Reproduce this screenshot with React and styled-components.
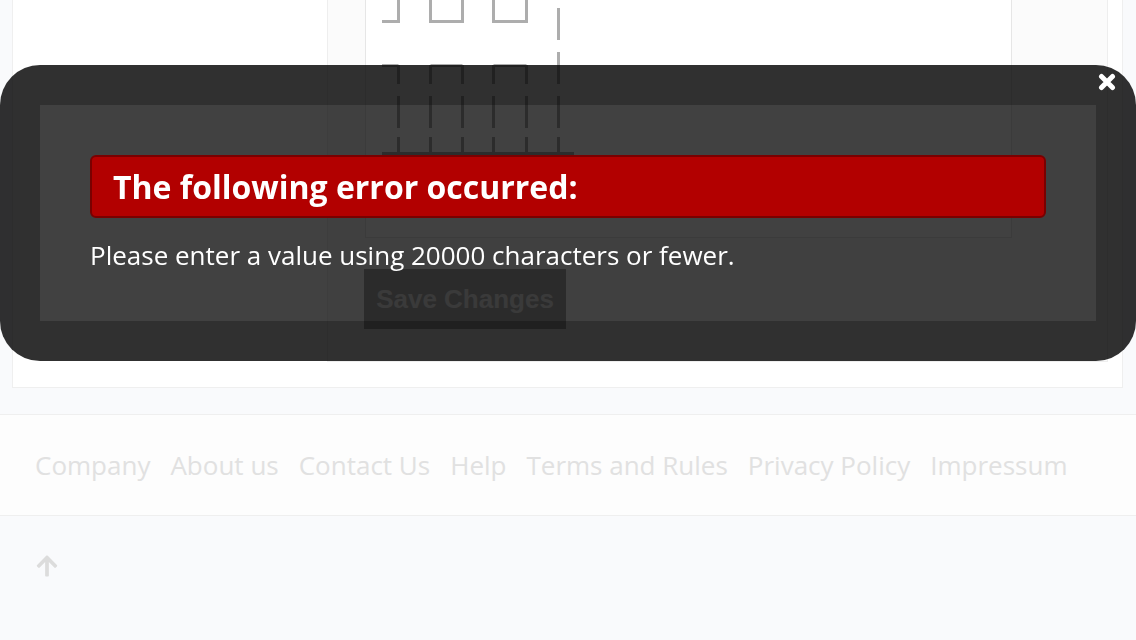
import styled, { createGlobalStyle } from 'styled-components';
import { FaArrowUp } from 'react-icons/fa';

const GlobalStyle = createGlobalStyle`
 html, body {
  margin: 0;
  padding: 0;
 }
 body {
  background: #f9fafc;
  font-family: "Open Sans", "Noto Sans", sans-serif;
  width: 1136px;
  height: 640px;
  overflow: hidden;
 }
 * {
  box-sizing: border-box;
 }
`;

const Container = styled.div`
 display: flex;
 height: 388px;
 margin: 0 13px 0 12px;
 background: #fff;
 border: 1px solid #efefef;
 border-top: none;
`;

const Sidebar = styled.aside`
 width: 314px;
 flex-shrink: 0;
`;

const Main = styled.div`
 flex: 1;
 height: 362px;
 margin-right: 14px;
 padding-left: 37px;
 background: #fbfbfb;
 border: 1px solid #eeeeee;
 border-top: none;
`;

const Editor = styled.div`
 width: 647px;
 height: 238px;
 padding-left: 15px;
 background: #fff;
 border: 1px solid #e6e6e6;
 border-top: none;
`;

const SaveButton = styled.button`
 display: block;
 width: 202px;
 height: 60px;
 margin: 31px 0 0 -1px;
 padding: 0;
 border: none;
 background: #a9a9a9;
 color: #e4e4e4;
 font-family: "Liberation Sans", Arial, sans-serif;
 font-weight: bold;
 font-size: 26px;
`;

const Footer = styled.footer`
 display: flex;
 align-items: center;
 gap: 20px;
 height: 102px;
 margin-top: 26px;
 padding-left: 35px;
 background: #fdfdfd;
 border-top: 1px solid #efefef;
 border-bottom: 1px solid #efefef;
`;

const FooterLink = styled.a`
 color: #e1e1e1;
 font-size: 26px;
 text-decoration: none;
`;

const Bottom = styled.div`
 padding: 38px 0 0 35px;
 color: #dcdcdc;
 font-size: 24px;
 line-height: 0;
`;

const Overlay = styled.div`
 position: fixed;
 top: 65px;
 left: 0;
 width: 1136px;
 height: 296px;
 padding: 50px;
 border: 40px solid rgba(0, 0, 0, 0.81);
 border-radius: 40px;
 background: rgba(0, 0, 0, 0.745);
 background-clip: padding-box;
 color: #fff;
`;

const CloseButton = styled.a`
 position: absolute;
 top: -32px;
 right: -20px;
 width: 18px;
 height: 18px;
 line-height: 0;
`;

const ErrorHeading = styled.h2`
 margin: 0;
 height: 63px;
 padding: 0 21px;
 background: #b20000;
 border: 2px solid #7a0000;
 border-radius: 6px;
 font-size: 32px;
 font-weight: bold;
 line-height: 59px;
`;

const ErrorText = styled.p`
 margin: 19px 0 0;
 font-size: 26px;
 line-height: 36px;
`;

function DashedGrid() {
 const c = '#adadad';
 const cols = [17, 49, 81, 112, 145];
 const dashes = [[65, 84], [96, 128], [137, 153]];
 return (
  <svg width="210" height="156" viewBox="0 0 210 156">
   <g stroke={c} strokeWidth="3" fill="none">
    <path d="M1 21.5H17.5V0" />
    <path d="M49.5 0V21.5H81.5V0" />
    <path d="M112.5 0V21.5H145.5V0" />
    <path d="M1 65.5H17.5M49.5 65.5H81.5M112.5 65.5H145.5" />
    {cols.map((x) =>
     dashes.map(([a, b]) => (
      <line key={x + '-' + a} x1={x + 0.5} y1={a} x2={x + 0.5} y2={b} />
     ))
    )}
    <line x1="177.5" y1="8" x2="177.5" y2="40" />
    <line x1="177.5" y1="52" x2="177.5" y2="84" />
    <line x1="177.5" y1="96" x2="177.5" y2="128" />
    <line x1="177.5" y1="137" x2="177.5" y2="153" />
    <line x1="1" y1="153.5" x2="193" y2="153.5" />
   </g>
  </svg>
 );
}

const links = ['Company', 'About us', 'Contact Us', 'Help', 'Terms and Rules', 'Privacy Policy', 'Impressum'];

export default function App() {
 return (
  <>
   <GlobalStyle />
   <Container>
    <Sidebar />
    <Main>
     <Editor>
      <DashedGrid />
     </Editor>
     <SaveButton>Save Changes</SaveButton>
    </Main>
   </Container>
   <Footer>
    {links.map((l) => (
     <FooterLink key={l} href="#">{l}</FooterLink>
    ))}
   </Footer>
   <Bottom>
    <FaArrowUp />
   </Bottom>
   <Overlay>
    <CloseButton href="#">
     <svg width="18" height="18" viewBox="0 0 18 18">
      <path d="M3.5 3.5L14.5 14.5M14.5 3.5L3.5 14.5" stroke="#fff" strokeWidth="5" strokeLinecap="round" />
     </svg>
    </CloseButton>
    <ErrorHeading>The following error occurred:</ErrorHeading>
    <ErrorText>Please enter a value using 20000 characters or fewer.</ErrorText>
   </Overlay>
  </>
 );
}
